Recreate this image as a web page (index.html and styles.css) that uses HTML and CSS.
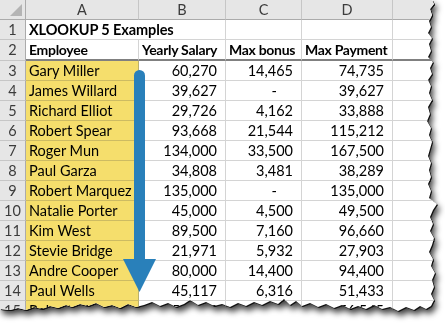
FILE: index.html
```html
<!DOCTYPE html>
<html>
<head>
<meta charset="utf-8">
<link rel="stylesheet" href="styles.css">
</head>
<body>
<div class="page">
  <div class="shadow">
    <div class="sheet">
      <div class="grid">
        <div class="corner"><span class="tri"></span></div>
        <div class="colh">A</div>
        <div class="colh">B</div>
        <div class="colh">C</div>
        <div class="colh">D</div>
        <div class="colh last"></div>

        <div class="rowh">1</div>
        <div class="cell title span2">XLOOKUP 5 Examples</div>
        <div class="cell"></div>
        <div class="cell"></div>
        <div class="cell"></div>

        <div class="rowh">2</div>
        <div class="cell hd">Employee</div>
        <div class="cell hd">Yearly Salary</div>
        <div class="cell hd">Max bonus</div>
        <div class="cell hd">Max Payment</div>
        <div class="cell hd"></div>

        <div class="rowh">3</div><div class="cell name">Gary Miller</div><div class="cell num">60,270</div><div class="cell num">14,465</div><div class="cell num">74,735</div><div class="cell"></div>
        <div class="rowh">4</div><div class="cell name">James Willard</div><div class="cell num">39,627</div><div class="cell num dash">-</div><div class="cell num">39,627</div><div class="cell"></div>
        <div class="rowh">5</div><div class="cell name">Richard Elliot</div><div class="cell num">29,726</div><div class="cell num">4,162</div><div class="cell num">33,888</div><div class="cell"></div>
        <div class="rowh">6</div><div class="cell name">Robert Spear</div><div class="cell num">93,668</div><div class="cell num">21,544</div><div class="cell num">115,212</div><div class="cell"></div>
        <div class="rowh">7</div><div class="cell name">Roger Mun</div><div class="cell num">134,000</div><div class="cell num">33,500</div><div class="cell num">167,500</div><div class="cell"></div>
        <div class="rowh">8</div><div class="cell name">Paul Garza</div><div class="cell num">34,808</div><div class="cell num">3,481</div><div class="cell num">38,289</div><div class="cell"></div>
        <div class="rowh">9</div><div class="cell name">Robert Marquez</div><div class="cell num">135,000</div><div class="cell num dash">-</div><div class="cell num">135,000</div><div class="cell"></div>
        <div class="rowh">10</div><div class="cell name">Natalie Porter</div><div class="cell num">45,000</div><div class="cell num">4,500</div><div class="cell num">49,500</div><div class="cell"></div>
        <div class="rowh">11</div><div class="cell name">Kim West</div><div class="cell num">89,500</div><div class="cell num">7,160</div><div class="cell num">96,660</div><div class="cell"></div>
        <div class="rowh">12</div><div class="cell name">Stevie Bridge</div><div class="cell num">21,971</div><div class="cell num">5,932</div><div class="cell num">27,903</div><div class="cell"></div>
        <div class="rowh">13</div><div class="cell name">Andre Cooper</div><div class="cell num">80,000</div><div class="cell num">14,400</div><div class="cell num">94,400</div><div class="cell"></div>
        <div class="rowh">14</div><div class="cell name">Paul Wells</div><div class="cell num">45,117</div><div class="cell num">6,316</div><div class="cell num">51,433</div><div class="cell"></div>
        <div class="rowh">15</div><div class="cell name">Robert Murray</div><div class="cell num">56,545</div><div class="cell num dash">-</div><div class="cell num">56,545</div><div class="cell"></div>
      </div>
      <svg class="arrow" width="445" height="326" viewBox="0 0 445 326">
        <rect x="134" y="70" width="11" height="192" rx="5.5" fill="#2980ba"/>
        <rect x="134" y="80" width="11" height="182" fill="#2980ba"/>
        <polygon points="123,259 156,259 139.5,292" fill="#2980ba"/>
      </svg>
    </div>
  </div>
</div>
</body>
</html>
```
FILE: styles.css
```css
html, body {
  margin: 0;
  padding: 0;
  background: #ffffff;
}

.page {
  width: 445px;
  height: 326px;
  overflow: hidden;
  background: #ffffff;
}

.shadow {
  width: 445px;
  height: 326px;
  filter: drop-shadow(1px 1px 0 #111111) drop-shadow(2px 4px 3px rgba(0, 0, 0, 0.75));
}

.sheet {
  position: relative;
  width: 445px;
  height: 326px;
  background: #ffffff;
  clip-path: polygon(0 0, 432px 0, 434px 4px, 430px 9px, 432px 15px, 429px 21px, 431px 27px, 428px 33px, 432px 38px, 429px 44px, 431px 51px, 428px 57px, 433px 62px, 430px 68px, 432px 74px, 428px 80px, 431px 86px, 429px 93px, 432px 100px, 428px 107px, 430px 114px, 427px 121px, 431px 128px, 429px 135px, 432px 142px, 430px 149px, 428px 156px, 431px 163px, 429px 170px, 431px 177px, 428px 184px, 431px 191px, 429px 198px, 437px 204px, 433px 210px, 430px 217px, 433px 224px, 430px 231px, 434px 238px, 432px 245px, 429px 252px, 433px 259px, 431px 266px, 435px 273px, 432px 280px, 434px 287px, 431px 294px, 434px 300px, 431px 306px, 426px 309px, 420px 306px, 414px 310px, 406px 307px, 398px 311px, 390px 307px, 382px 309px, 374px 305px, 366px 309px, 358px 306px, 350px 309px, 342px 305px, 334px 308px, 326px 304px, 318px 307px, 310px 303px, 302px 306px, 296px 301px, 290px 305px, 284px 299px, 278px 304px, 270px 301px, 262px 305px, 254px 302px, 246px 306px, 238px 303px, 230px 307px, 222px 304px, 214px 306px, 206px 302px, 198px 305px, 190px 300px, 184px 304px, 176px 307px, 168px 303px, 160px 306px, 152px 302px, 144px 305px, 136px 307px, 128px 304px, 120px 308px, 112px 305px, 104px 307px, 96px 303px, 88px 306px, 80px 304px, 72px 307px, 66px 305px, 58px 308px, 50px 306px, 42px 309px, 34px 307px, 26px 310px, 18px 308px, 10px 310px, 0 309px);
}

.grid {
  display: grid;
  grid-template-columns: 26px 113px 87px 76px 91px 52px;
  grid-template-rows: 20px 20px 21px repeat(13, 20px);
  font-family: Lato, "Liberation Sans", sans-serif;
  font-size: 14.5px;
  color: #000000;
}

.corner {
  position: relative;
  background: #e6e6e6;
  border-right: 1px solid #ababab;
  border-bottom: 1px solid #ababab;
}

.tri {
  position: absolute;
  right: 3px;
  bottom: 3px;
  width: 0;
  height: 0;
  border-left: 12px solid transparent;
  border-bottom: 12px solid #b4b4b4;
}

.colh {
  background: #e6e6e6;
  border-right: 1px solid #c6c6c6;
  border-bottom: 1px solid #ababab;
  text-align: center;
  line-height: 19px;
  font-size: 14.5px;
  color: #3c3c3c;
}

.colh.last {
  border-right: none;
}

.rowh {
  background: #e6e6e6;
  border-right: 1px solid #ababab;
  border-bottom: 1px solid #c6c6c6;
  text-align: center;
  line-height: 20px;
  font-size: 14.5px;
  color: #3c3c3c;
}

.cell {
  border-right: 1px solid #d4d4d4;
  border-bottom: 1px solid #d4d4d4;
  line-height: 20px;
  padding: 0 3px;
  white-space: nowrap;
  overflow: hidden;
}

.span2 {
  grid-column: span 2;
}

.title {
  font-weight: bold;
  overflow: visible;
  letter-spacing: -0.1px;
}

.hd {
  font-weight: bold;
  font-size: 14px;
  border-bottom: 2px solid #808080;
  line-height: 19px;
  letter-spacing: -0.3px;
}

.name {
  background: #f5de6c;
  border-right: 1px solid #b9b070;
  border-bottom: 1px solid #cdbb62;
}

.num {
  text-align: right;
  padding-right: 8px;
}

.dash {
  padding-right: 24px;
}

.arrow {
  position: absolute;
  left: 0;
  top: 0;
  pointer-events: none;
}
```
